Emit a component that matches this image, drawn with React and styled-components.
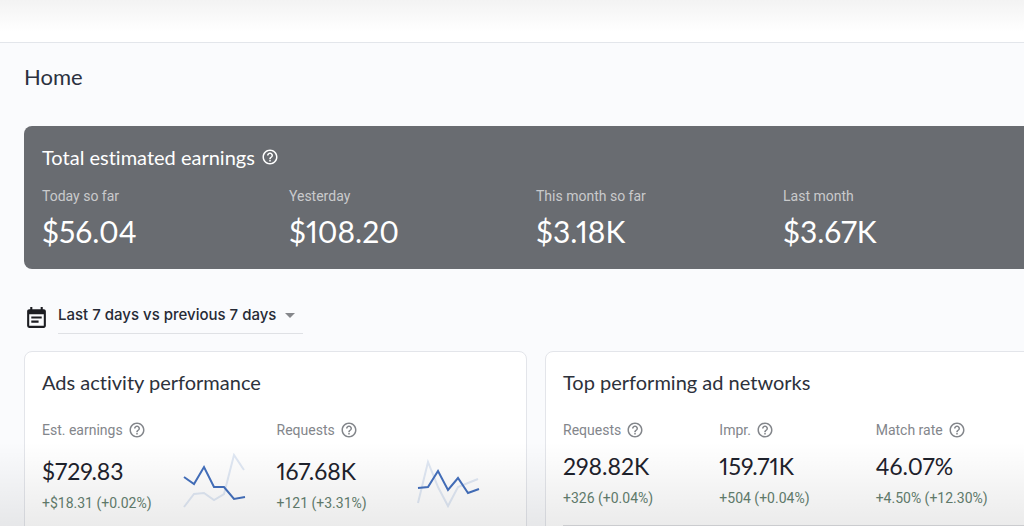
import React from "react";
import styled, { createGlobalStyle } from "styled-components";
import { MdHelpOutline, MdEventNote, MdArrowDropDown } from "react-icons/md";

const GlobalStyle = createGlobalStyle`
  * { box-sizing: border-box; }
  body {
    margin: 0;
    background: #fafbfd;
    font-family: Roboto, "Liberation Sans", sans-serif;
    font-variant-ligatures: none;
    color: #202633;
  }
  h1, h2, p, dl, dt, dd { margin: 0; font-weight: 400; }
`;

const display = `Lato, "Open Sans", sans-serif`;

const Page = styled.div`
  position: relative;
  height: 100vh;
  overflow: hidden;
  &::after {
    content: "";
    position: absolute;
    inset: auto 0 0 0;
    height: 84px;
    background: linear-gradient(rgba(0, 0, 0, 0), rgba(0, 0, 0, 0.08));
    pointer-events: none;
  }
`;

const TopBar = styled.header`
  height: 43px;
  border-bottom: 1px solid #e3e6eb;
  background: linear-gradient(#f3f3f3, #ffffff 32px);
`;

const Board = styled.main`
  width: 100%;
  margin-left: 24px;
  padding-top: 20px;
`;

const PageTitle = styled.h1`
  font-family: ${display};
  font-size: 22px;
  line-height: 28px;
  color: #2b3140;
`;

const Earnings = styled.section`
  margin-top: 35px;
  padding: 19px 18px 18px;
  height: 143px;
  border-radius: 8px;
  background: #696c71;
  color: #fff;
`;

const EarningsTitle = styled.h2`
  display: flex;
  align-items: center;
  gap: 6px;
  font-family: ${display};
  font-size: 20px;
  line-height: 24px;
`;

const HelpButton = styled.button`
  display: inline-flex;
  padding: 0;
  border: 0;
  background: none;
  color: inherit;
  font-size: 18px;
`;

const Stats = styled.dl`
  display: grid;
  grid-template-columns: repeat(${(p) => p.$count}, minmax(0, 1fr));
`;

const EarningsStats = styled(Stats)`
  margin-top: 18px;
`;

const EarningsLabel = styled.dt`
  font-size: 14px;
  line-height: 18px;
  color: #c9cacc;
`;

const EarningsValue = styled.dd`
  margin-top: 8px;
  font-family: ${display};
  font-size: 30px;
  line-height: 36px;
  font-variant-numeric: proportional-nums;
`;

const Period = styled.div`
  display: flex;
  align-items: center;
  gap: 9px;
  margin-top: 30px;
  height: 36px;
`;

const CalendarIcon = styled(MdEventNote)`
  flex: none;
  margin-top: 2px;
  font-size: 25px;
  color: #1c1d22;
`;

const SelectBox = styled.label`
  position: relative;
  display: block;
  width: 245px;
  border-bottom: 1px solid #dfe1e5;
`;

const PeriodSelect = styled.select`
  appearance: none;
  display: block;
  width: 100%;
  height: 33px;
  padding: 0 24px 4px 0;
  border: 0;
  background: none;
  color: #262a35;
  font-family: Inter, sans-serif;
  font-size: 15px;
  line-height: 24px;
  font-weight: 500;
`;

const SelectArrow = styled(MdArrowDropDown)`
  position: absolute;
  right: 1px;
  top: 3px;
  font-size: 24px;
  color: #85878b;
  pointer-events: none;
`;

const Cards = styled.div`
  display: grid;
  grid-template-columns: repeat(2, minmax(0, 1fr));
  gap: 18px;
  margin-top: 16px;
`;

const Card = styled.section`
  min-height: 240px;
  padding: 17px 15px 18px 17px;
  border: 1px solid #e3e5ea;
  border-radius: 8px;
  background: #fff;
`;

const CardTitle = styled.h2`
  font-family: ${display};
  font-size: 20px;
  line-height: 26px;
  color: #2d313b;
`;

const CardStats = styled(Stats)`
  margin-top: 25px;
`;

const StatLabel = styled.dt`
  display: flex;
  align-items: center;
  gap: 5px;
  font-size: 14px;
  line-height: 20px;
  color: #83868b;
`;

const StatBody = styled.div`
  display: flex;
  gap: 28px;
  margin-top: ${(p) => (p.$roomy ? 16 : 11)}px;
`;

const StatValue = styled.dd`
  min-width: 112px;
  font-family: ${display};
  font-size: 23px;
  line-height: 30px;
  font-variant-numeric: proportional-nums;
  color: #1e222c;
`;

const StatChange = styled.dd`
  margin-top: 7px;
  font-size: 14px;
  line-height: 20px;
  color: #64806f;
  white-space: nowrap;
`;

const Spark = styled.svg`
  flex: none;
  margin-top: -3px;
  width: 64px;
  height: 56px;
  fill: none;
  stroke-width: 2;
`;

const TableTop = styled.div`
  margin-top: 17px;
  border-top: 2px solid #dcdde0;
`;

const earnings = [
  ["Today so far", "$56.04"],
  ["Yesterday", "$108.20"],
  ["This month so far", "$3.18K"],
  ["Last month", "$3.67K"],
];

const activity = [
  {
    label: "Est. earnings",
    value: "$729.83",
    change: "+$18.31 (+0.02%)",
    now: "2,24 12,31 22,14 32,34 42,34 52,46 63,44",
    before: "2,54 12,41 22,40 32,47 42,41 52,2 62,17",
  },
  {
    label: "Requests",
    value: "167.68K",
    change: "+121 (+3.31%)",
    now: "1,35 11,34 21,18 31,37 41,25 51,40 62,36",
    before: "1,50 11,9 21,34 31,53 41,34 51,30 61,26",
  },
];

const networks = [
  { label: "Requests", value: "298.82K", change: "+326 (+0.04%)" },
  { label: "Impr.", value: "159.71K", change: "+504 (+0.04%)" },
  { label: "Match rate", value: "46.07%", change: "+4.50% (+12.30%)" },
];

function Help({ topic }) {
  return (
    <HelpButton type="button" aria-label={`About ${topic}`}>
      <MdHelpOutline />
    </HelpButton>
  );
}

function Stat({ item }) {
  return (
    <div>
      <StatLabel>
        {item.label}
        <Help topic={item.label} />
      </StatLabel>
      <StatBody $roomy={Boolean(item.now)}>
        <div>
          <StatValue>{item.value}</StatValue>
          <StatChange>{item.change}</StatChange>
        </div>
        {item.now && (
          <Spark viewBox="0 0 64 56" aria-hidden="true">
            <polyline points={item.before} stroke="#e0e8f4" />
            <polyline points={item.now} stroke="#4470bd" />
          </Spark>
        )}
      </StatBody>
    </div>
  );
}

export default function App() {
  return (
    <Page>
      <GlobalStyle />
      <TopBar />
      <Board>
        <PageTitle>Home</PageTitle>
        <Earnings>
          <EarningsTitle>
            Total estimated earnings
            <Help topic="total estimated earnings" />
          </EarningsTitle>
          <EarningsStats $count={4}>
            {earnings.map(([label, value]) => (
              <div key={label}>
                <EarningsLabel>{label}</EarningsLabel>
                <EarningsValue>{value}</EarningsValue>
              </div>
            ))}
          </EarningsStats>
        </Earnings>
        <Period>
          <CalendarIcon />
          <SelectBox>
            <PeriodSelect aria-label="Date range">
              <option>Last 7 days vs previous 7 days</option>
            </PeriodSelect>
            <SelectArrow />
          </SelectBox>
        </Period>
        <Cards>
          <Card>
            <CardTitle>Ads activity performance</CardTitle>
            <CardStats $count={2}>
              {activity.map((item) => (
                <Stat key={item.label} item={item} />
              ))}
            </CardStats>
          </Card>
          <Card>
            <CardTitle>Top performing ad networks</CardTitle>
            <CardStats $count={3}>
              {networks.map((item) => (
                <Stat key={item.label} item={item} />
              ))}
            </CardStats>
            <TableTop />
          </Card>
        </Cards>
      </Board>
    </Page>
  );
}
